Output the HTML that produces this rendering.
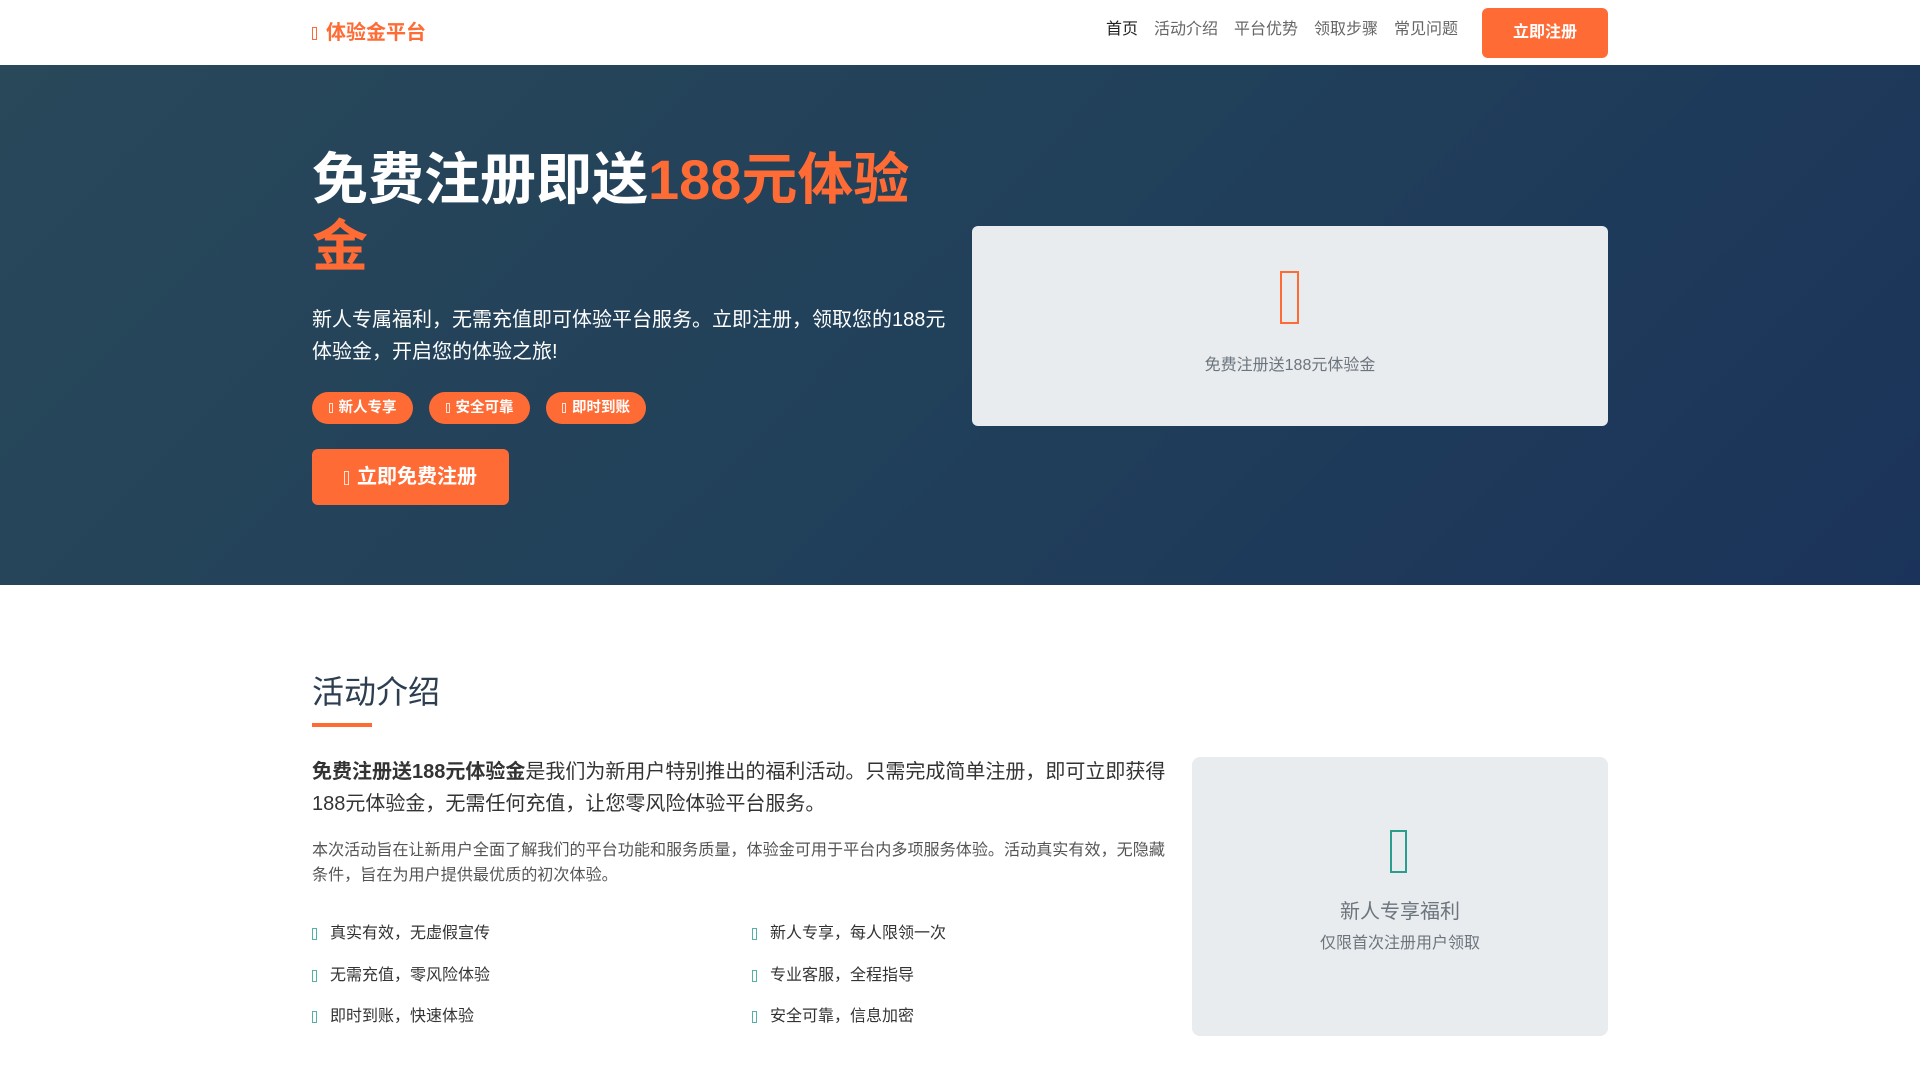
<!DOCTYPE html>
<html><head><meta charset="utf-8"><style>
*{margin:0;padding:0;box-sizing:border-box}
body{width:1920px;height:1080px;overflow:hidden;background:#fff;font-family:"Liberation Sans","Noto Sans CJK SC",sans-serif;position:relative}
.a{position:absolute;white-space:nowrap}
.box{display:inline-block;border:1.5px solid currentColor;vertical-align:middle}
header{position:absolute;left:0;top:0;width:1920px;height:65px;background:#fff}
.nav{font-size:16px;color:#666;top:19px;line-height:22px}
.hero{position:absolute;left:0;top:65px;width:1920px;height:520px;background:linear-gradient(135deg,#29485a 0%,#21405a 50%,#1b335a 100%)}
.tag{position:absolute;top:392px;height:32px;border-radius:16px;background:#ff6b35;color:#fff;font-weight:bold;font-size:14.5px;line-height:32px;text-align:center}
.li{font-size:16px;color:#333;line-height:24px}
.li .box{color:#2a9d8f;width:5px;height:12px;margin-right:13px;border-width:1px;opacity:.8}
</style></head><body>
<header>
<div class="a" style="left:312px;top:21px;color:#ff6b35;font-size:20px;font-weight:bold;line-height:24px"><span class="box" style="width:5px;height:13px;border-width:1px;margin-right:9px;vertical-align:-1px"></span>体验金平台</div>
<div class="a nav" style="left:1106px;color:#222">首页</div>
<div class="a nav" style="left:1154px">活动介绍</div>
<div class="a nav" style="left:1234px">平台优势</div>
<div class="a nav" style="left:1314px">领取步骤</div>
<div class="a nav" style="left:1394px">常见问题</div>
<div class="a" style="left:1482px;top:8px;width:126px;height:50px;background:#ff6b35;border-radius:6px;color:#fff;font-weight:bold;font-size:16px;line-height:50px;text-align:center">立即注册</div>
</header>
<div class="hero"></div>
<div class="a" style="left:312px;top:146px;font-size:56px;font-weight:bold;line-height:67px;color:#fff;white-space:normal;width:640px">免费注册即送<span style="color:#ff6b35">188元体验金</span></div>
<div class="a" style="left:312px;top:304px;width:640px;white-space:normal;font-size:20px;line-height:32px;color:#fff">新人专属福利，无需充值即可体验平台服务。立即注册，领取您的188元体验金，开启您的体验之旅!</div>
<div class="tag" style="left:312px;width:101px"><span class="box" style="width:4px;height:10px;border-width:1px;margin-right:6px;opacity:.8"></span>新人专享</div>
<div class="tag" style="left:429px;width:101px"><span class="box" style="width:4px;height:10px;border-width:1px;margin-right:6px;opacity:.8"></span>安全可靠</div>
<div class="tag" style="left:546px;width:100px"><span class="box" style="width:4px;height:10px;border-width:1px;margin-right:6px;opacity:.8"></span>即时到账</div>
<div class="a" style="left:312px;top:449px;width:197px;height:56px;background:#ff6b35;border-radius:6px;color:#fff;font-weight:bold;font-size:20px;line-height:56px;text-align:center"><span class="box" style="width:5px;height:14px;border-width:1px;margin-right:8px;opacity:.8"></span>立即免费注册</div>
<div class="a" style="left:972px;top:226px;width:636px;height:200px;background:#e8ecef;border-radius:6px"></div>
<div class="a" style="left:1280px;top:271px;width:19px;height:53px;border:2.5px solid #ff6b35"></div>
<div class="a" style="left:972px;top:355px;width:636px;text-align:center;font-size:16px;color:#6c757d;line-height:22px">免费注册送188元体验金</div>

<div class="a" style="left:312px;top:670px;font-size:32px;color:#2c3e50;line-height:44px">活动介绍</div>
<div class="a" style="left:312px;top:723px;width:60px;height:4px;background:#ff6b35"></div>
<div class="a" style="left:312px;top:756px;width:862px;white-space:normal;font-size:20px;line-height:32px;color:#333"><b>免费注册送188元体验金</b>是我们为新用户特别推出的福利活动。只需完成简单注册，即可立即获得188元体验金，无需任何充值，让您零风险体验平台服务。</div>
<div class="a" style="left:312px;top:838px;width:862px;white-space:normal;font-size:16.1px;line-height:25px;color:#555">本次活动旨在让新用户全面了解我们的平台功能和服务质量，体验金可用于平台内多项服务体验。活动真实有效，无隐藏条件，旨在为用户提供最优质的初次体验。</div>
<div class="a li" style="left:312px;top:922px"><span class="box"></span>真实有效，无虚假宣传</div>
<div class="a li" style="left:752px;top:922px"><span class="box"></span>新人专享，每人限领一次</div>
<div class="a li" style="left:312px;top:964px"><span class="box"></span>无需充值，零风险体验</div>
<div class="a li" style="left:752px;top:964px"><span class="box"></span>专业客服，全程指导</div>
<div class="a li" style="left:312px;top:1005px"><span class="box"></span>即时到账，快速体验</div>
<div class="a li" style="left:752px;top:1005px"><span class="box"></span>安全可靠，信息加密</div>
<div class="a" style="left:1192px;top:757px;width:416px;height:279px;background:#e8ecef;border-radius:8px"></div>
<div class="a" style="left:1390px;top:830px;width:17px;height:43px;border:2px solid #2a9d8f"></div>
<div class="a" style="left:1192px;top:898px;width:416px;text-align:center;font-size:20px;color:#6c757d;line-height:28px">新人专享福利</div>
<div class="a" style="left:1192px;top:933px;width:416px;text-align:center;font-size:16px;color:#6c757d;line-height:22px">仅限首次注册用户领取</div>
</body></html>
